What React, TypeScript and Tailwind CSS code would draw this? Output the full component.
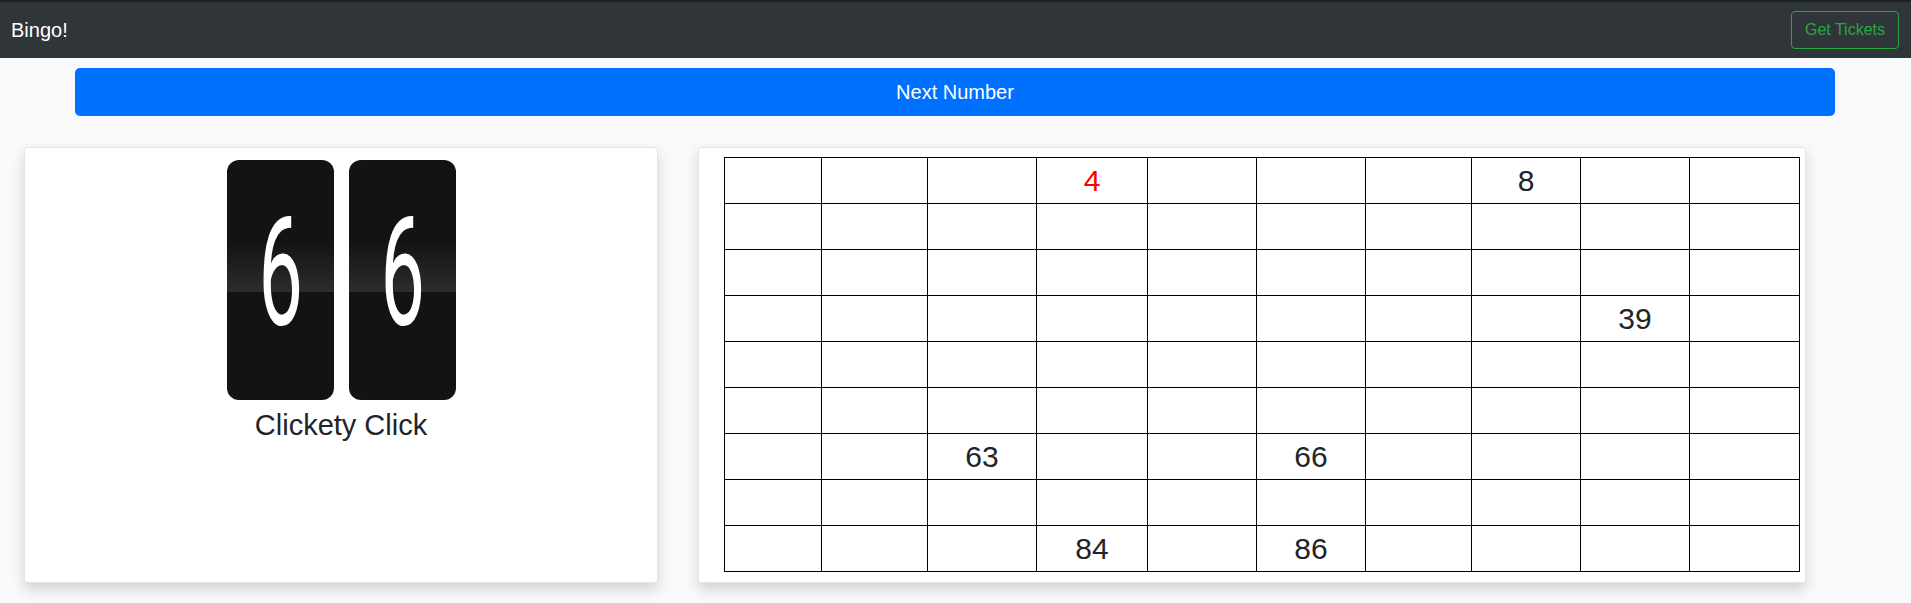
import React from "react";

const COL_WIDTHS =
  "grid-cols-[97px_106px_109px_111px_109px_109px_106px_109px_109px_110px]";

const called = [4, 8, 39, 63, 66, 84, 86];
const latest = 4;

const FlipDigit = ({ digit }: { digit: string }) => (
  <div className="relative w-[107px] h-[240px] rounded-[12px] overflow-hidden bg-[linear-gradient(to_bottom,#131313_0%,#131313_34%,#2c2c2c_55%,#131313_55%,#131313_100%)] flex items-center justify-center pb-[14px]">
    <span className="font-['Roboto',sans-serif] font-normal text-[152px] leading-none text-white scale-x-[0.52] inline-block">
      {digit}
    </span>
  </div>
);

const Board = () => {
  const cells = Array.from({ length: 90 }, (_, i) => i + 1);
  return (
    <div className={`grid ${COL_WIDTHS} w-[1076px] border-l border-t border-black`}>
      {cells.map((n) => {
        const shown = called.includes(n);
        return (
          <div
            key={n}
            className={`h-[46px] border-r border-b border-black flex items-center justify-center text-[30px] ${
              n === latest ? "text-[#ff0000]" : "text-[#212529]"
            }`}
          >
            {shown ? n : ""}
          </div>
        );
      })}
    </div>
  );
};

const App = () => {
  return (
    <div className="min-h-screen bg-[#f8f9fa] font-['Liberation_Sans',Arial,sans-serif]">
      <nav className="h-[58px] bg-[#303539] border-t-2 border-[#1d2023] flex items-center justify-between pl-[11px] pr-[12px]">
        <span className="text-[20px] text-white">Bingo!</span>
        <button
          type="button"
          className="h-[38px] w-[108px] border border-[#28a745] text-[#28a745] rounded-[4px] text-[16px]"
        >
          Get Tickets
        </button>
      </nav>

      <div className="pt-[10px] pl-[75px] pr-[76px]">
        <button
          type="button"
          className="w-full h-[48px] bg-[#0071ff] text-white text-[20px] rounded-[5px]"
        >
          Next Number
        </button>
      </div>

      <div className="flex gap-[40px] pl-[24px] mt-[31px]">
        <div className="w-[634px] h-[436px] bg-white border border-black/10 rounded-[4px] shadow-[0_0.4rem_0.8rem_rgba(0,0,0,0.15)] flex flex-col items-center pt-[12px]">
          <div className="flex gap-[15px] ml-[1px]">
            <FlipDigit digit="6" />
            <FlipDigit digit="6" />
          </div>
          <h3 className="mt-[8px] text-[29px] leading-[1.2] text-[#212529]">Clickety Click</h3>
        </div>

        <div className="w-[1108px] h-[436px] bg-white border border-black/10 rounded-[4px] shadow-[0_0.4rem_0.8rem_rgba(0,0,0,0.15)] pl-[25px] pt-[9px]">
          <Board />
        </div>
      </div>
    </div>
  );
};

export default App;
